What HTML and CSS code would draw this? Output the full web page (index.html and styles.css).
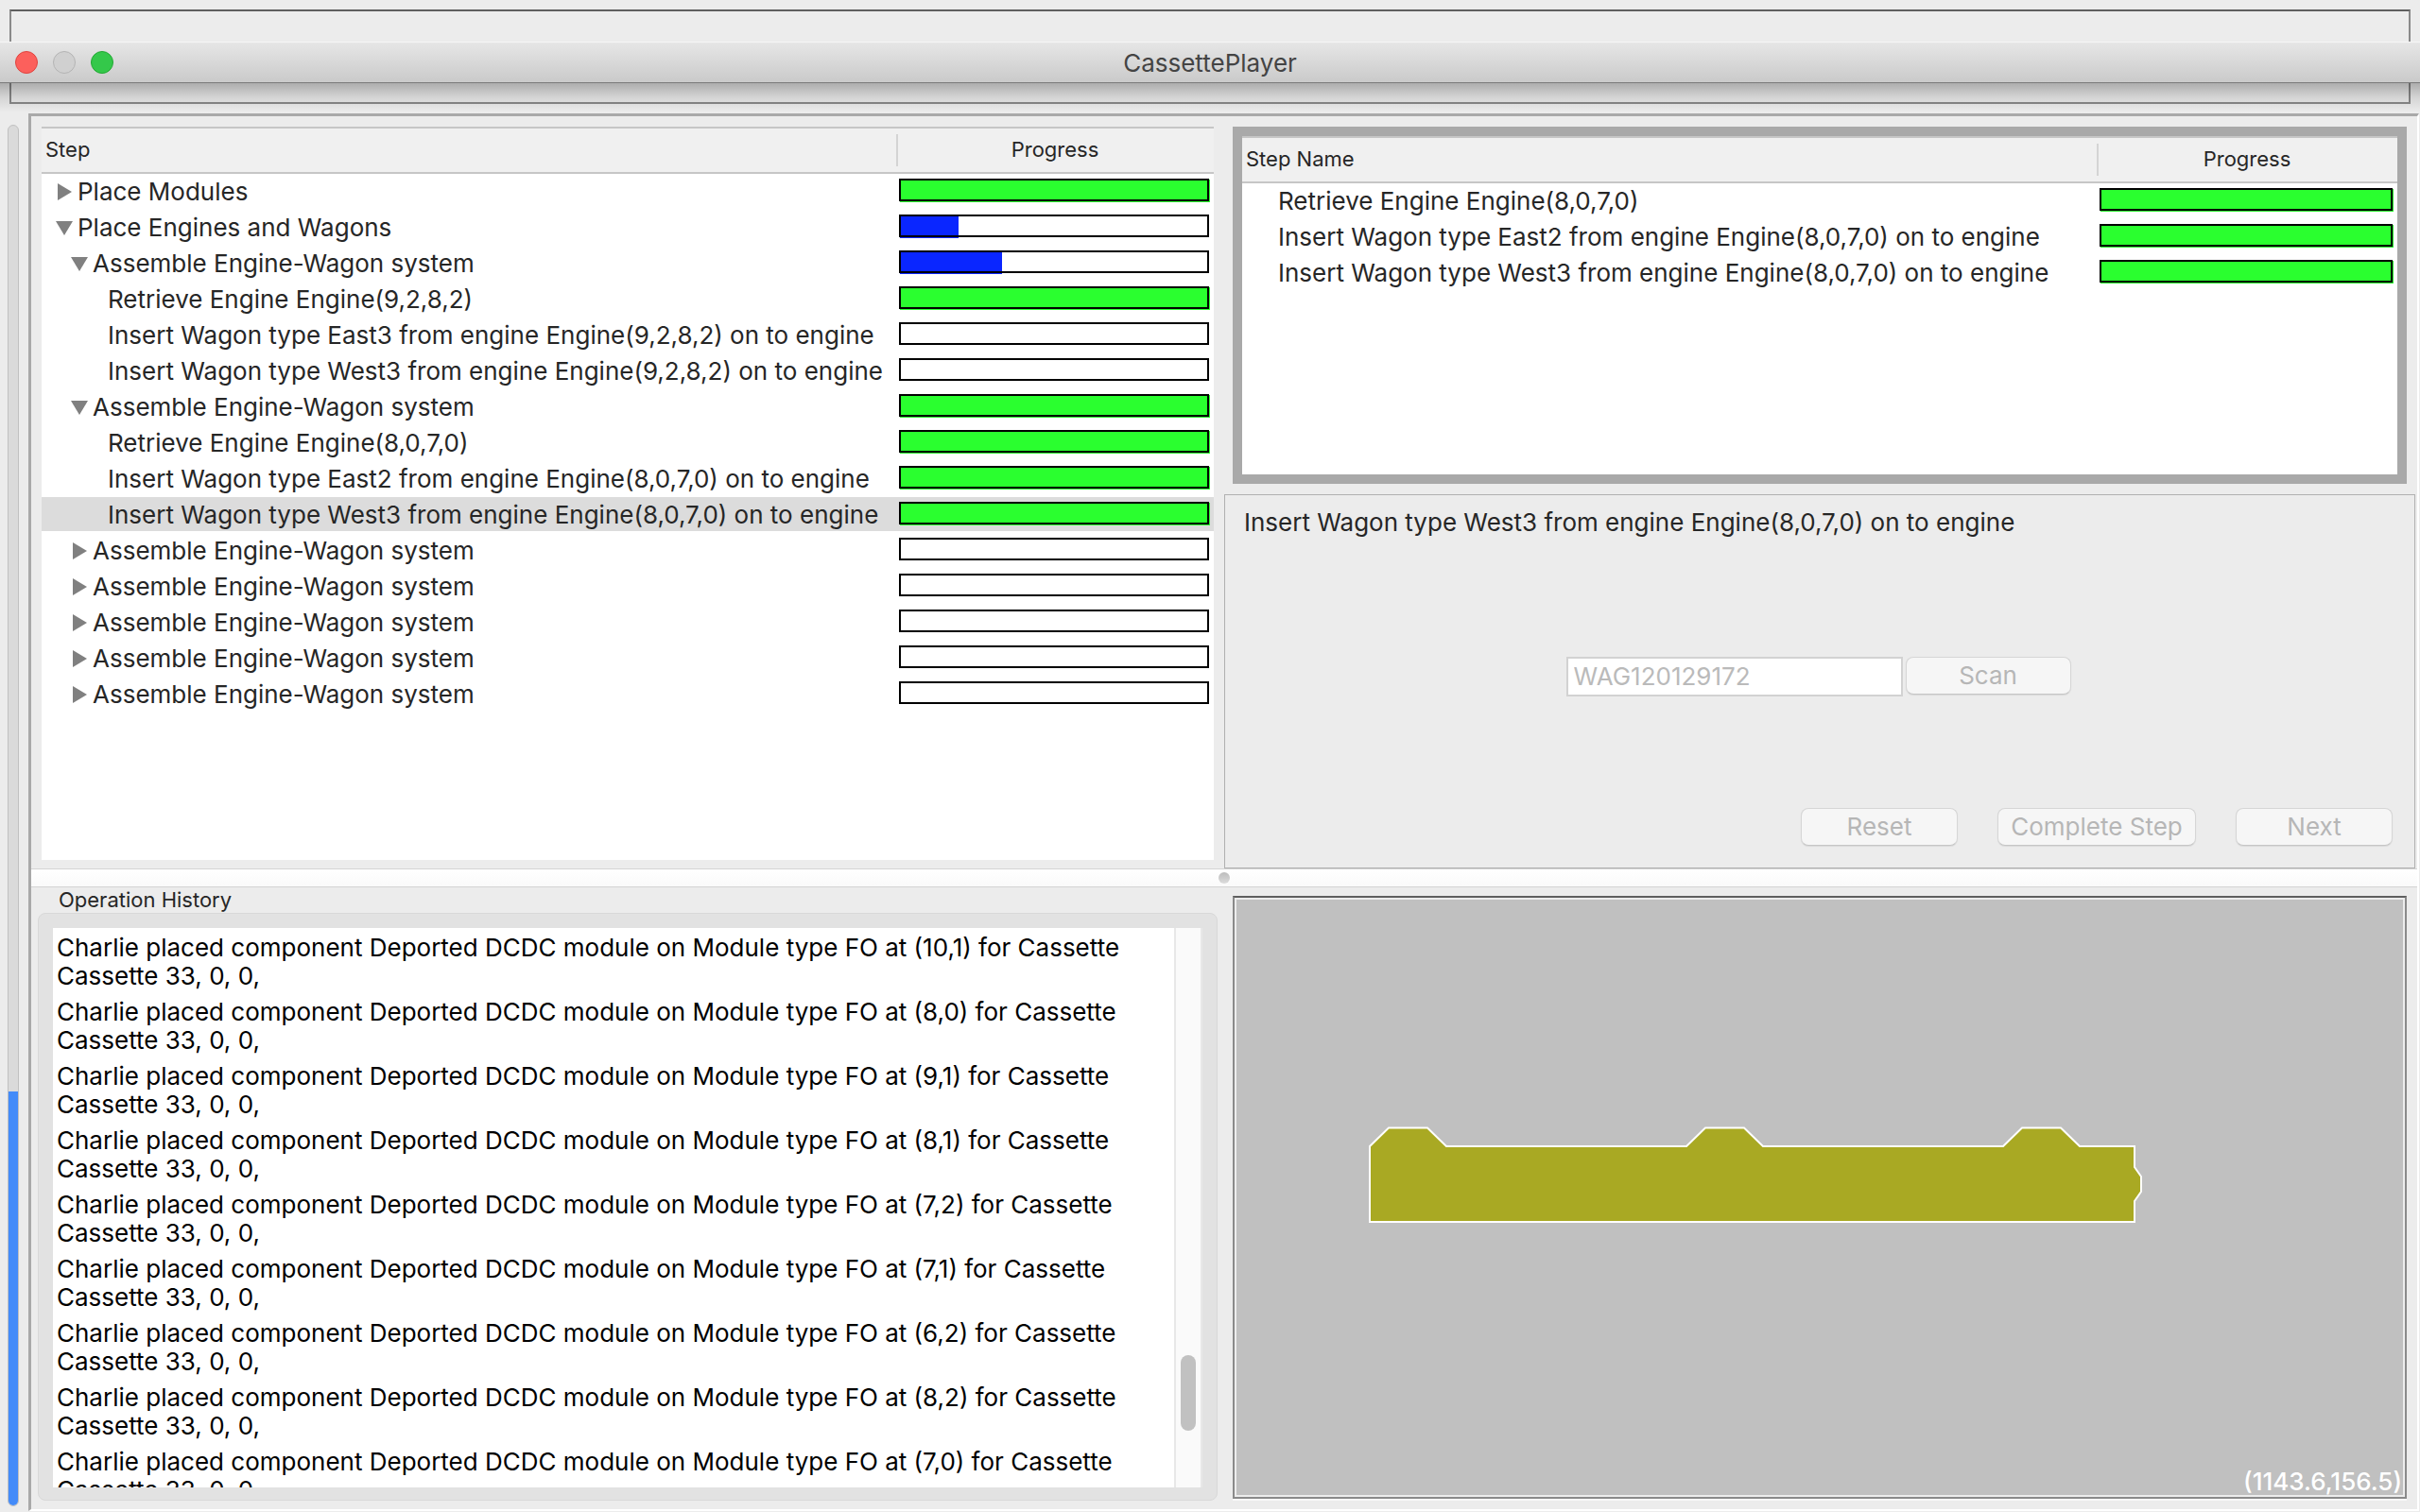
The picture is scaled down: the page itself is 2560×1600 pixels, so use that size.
FILE: index.html
```html
<!DOCTYPE html>
<html lang="en">
<head>
<meta charset="utf-8">
<title>CassettePlayer</title>
<link rel="stylesheet" href="styles.css">
</head>
<body>
<div class="app">
  <header class="top">
    <div class="top-frame"></div>
    <div class="titlebar">
      <div class="lights">
        <button class="light light-close" aria-label="Close"></button>
        <button class="light light-min" aria-label="Minimize" disabled></button>
        <button class="light light-zoom" aria-label="Zoom"></button>
      </div>
      <h1 class="title">CassettePlayer</h1>
    </div>
  </header>

  <div class="body">
    <div class="meter" role="progressbar" aria-label="Overall progress" aria-valuenow="30"><div class="meter-fill"></div></div>

    <main class="main">
      <div class="row row-top">
        <section class="cell">
          <div class="panel">
            <table class="steps">
              <colgroup><col><col class="col-progress"></colgroup>
              <thead><tr><th>Step</th><th>Progress</th></tr></thead>
              <tbody>
                <tr><td class="l0"><div class="step"><button class="tog" aria-label="Expand"><svg width="20" height="20"><path d="M3 1v18l15-9z"/></svg></button>Place Modules</div></td><td><div class="bar"><div class="fill" style="width:100%"></div></div></td></tr>
                <tr><td class="l0"><div class="step"><button class="tog" aria-label="Collapse"><svg width="20" height="20"><path d="M1 3h18l-9 15z"/></svg></button>Place Engines and Wagons</div></td><td><div class="bar"><div class="fill part" style="width:19%"></div></div></td></tr>
                <tr><td class="l1"><div class="step"><button class="tog" aria-label="Collapse"><svg width="20" height="20"><path d="M1 3h18l-9 15z"/></svg></button>Assemble Engine-Wagon system</div></td><td><div class="bar"><div class="fill part" style="width:33%"></div></div></td></tr>
                <tr><td class="l2"><div class="step">Retrieve Engine Engine(9,2,8,2)</div></td><td><div class="bar"><div class="fill" style="width:100%"></div></div></td></tr>
                <tr><td class="l2"><div class="step">Insert Wagon type East3 from engine Engine(9,2,8,2) on to engine</div></td><td><div class="bar"></div></td></tr>
                <tr><td class="l2"><div class="step">Insert Wagon type West3 from engine Engine(9,2,8,2) on to engine</div></td><td><div class="bar"></div></td></tr>
                <tr><td class="l1"><div class="step"><button class="tog" aria-label="Collapse"><svg width="20" height="20"><path d="M1 3h18l-9 15z"/></svg></button>Assemble Engine-Wagon system</div></td><td><div class="bar"><div class="fill" style="width:100%"></div></div></td></tr>
                <tr><td class="l2"><div class="step">Retrieve Engine Engine(8,0,7,0)</div></td><td><div class="bar"><div class="fill" style="width:100%"></div></div></td></tr>
                <tr><td class="l2"><div class="step">Insert Wagon type East2 from engine Engine(8,0,7,0) on to engine</div></td><td><div class="bar"><div class="fill" style="width:100%"></div></div></td></tr>
                <tr class="selected"><td class="l2"><div class="step">Insert Wagon type West3 from engine Engine(8,0,7,0) on to engine</div></td><td><div class="bar"><div class="fill" style="width:100%"></div></div></td></tr>
                <tr><td class="l1"><div class="step"><button class="tog" aria-label="Expand"><svg width="20" height="20"><path d="M3 1v18l15-9z"/></svg></button>Assemble Engine-Wagon system</div></td><td><div class="bar"></div></td></tr>
                <tr><td class="l1"><div class="step"><button class="tog" aria-label="Expand"><svg width="20" height="20"><path d="M3 1v18l15-9z"/></svg></button>Assemble Engine-Wagon system</div></td><td><div class="bar"></div></td></tr>
                <tr><td class="l1"><div class="step"><button class="tog" aria-label="Expand"><svg width="20" height="20"><path d="M3 1v18l15-9z"/></svg></button>Assemble Engine-Wagon system</div></td><td><div class="bar"></div></td></tr>
                <tr><td class="l1"><div class="step"><button class="tog" aria-label="Expand"><svg width="20" height="20"><path d="M3 1v18l15-9z"/></svg></button>Assemble Engine-Wagon system</div></td><td><div class="bar"></div></td></tr>
                <tr><td class="l1"><div class="step"><button class="tog" aria-label="Expand"><svg width="20" height="20"><path d="M3 1v18l15-9z"/></svg></button>Assemble Engine-Wagon system</div></td><td><div class="bar"></div></td></tr>
              </tbody>
            </table>
          </div>
        </section>

        <section class="cell-right">
          <div class="panel panel-framed">
            <table class="steps">
              <colgroup><col><col class="col-progress-small"></colgroup>
              <thead><tr><th>Step Name</th><th>Progress</th></tr></thead>
              <tbody>
                <tr><td class="sub"><div class="step">Retrieve Engine Engine(8,0,7,0)</div></td><td><div class="bar"><div class="fill" style="width:100%"></div></div></td></tr>
                <tr><td class="sub"><div class="step">Insert Wagon type East2 from engine Engine(8,0,7,0) on to engine</div></td><td><div class="bar"><div class="fill" style="width:100%"></div></div></td></tr>
                <tr><td class="sub"><div class="step">Insert Wagon type West3 from engine Engine(8,0,7,0) on to engine</div></td><td><div class="bar"><div class="fill" style="width:100%"></div></div></td></tr>
              </tbody>
            </table>
          </div>
          <form class="detail">
            <label class="detail-title" for="barcode">Insert Wagon type West3 from engine Engine(8,0,7,0) on to engine</label>
            <div class="scan">
              <input class="code" id="barcode" type="text" value="WAG120129172" disabled>
              <button class="btn btn-scan" type="button" disabled>Scan</button>
            </div>
            <div class="actions">
              <button class="btn btn-action" type="button" disabled>Reset</button>
              <button class="btn btn-wide" type="button" disabled>Complete Step</button>
              <button class="btn btn-action" type="button" disabled>Next</button>
            </div>
          </form>
        </section>
      </div>

      <div class="splitter" role="separator"><span class="grip"></span></div>

      <div class="row row-bottom">
        <section class="history">
          <h2 class="history-title">Operation History</h2>
          <div class="group">
            <div class="log">
              <div class="log-text">
                <p>Charlie placed component Deported DCDC module on Module type FO at (10,1) for Cassette Cassette 33, 0, 0,</p>
                <p>Charlie placed component Deported DCDC module on Module type FO at (8,0) for Cassette Cassette 33, 0, 0,</p>
                <p>Charlie placed component Deported DCDC module on Module type FO at (9,1) for Cassette Cassette 33, 0, 0,</p>
                <p>Charlie placed component Deported DCDC module on Module type FO at (8,1) for Cassette Cassette 33, 0, 0,</p>
                <p>Charlie placed component Deported DCDC module on Module type FO at (7,2) for Cassette Cassette 33, 0, 0,</p>
                <p>Charlie placed component Deported DCDC module on Module type FO at (7,1) for Cassette Cassette 33, 0, 0,</p>
                <p>Charlie placed component Deported DCDC module on Module type FO at (6,2) for Cassette Cassette 33, 0, 0,</p>
                <p>Charlie placed component Deported DCDC module on Module type FO at (8,2) for Cassette Cassette 33, 0, 0,</p>
                <p>Charlie placed component Deported DCDC module on Module type FO at (7,0) for Cassette Cassette 33, 0, 0,</p>
              </div>
              <div class="scrollbar"><div class="thumb"></div></div>
            </div>
          </div>
        </section>
        <section class="canvas">
          <svg class="drawing" viewBox="0 0 1234 630" preserveAspectRatio="xMidYMid meet" role="img" aria-label="Wagon outline">
            <path d="M141 261L161 241.500H202L222 261H476L496 241.500H537L557 261H811L831 241.500H872L892 261H950V283L957 293V309L950 319V341H141Z" fill="#a9a923" stroke="#fff" stroke-width="2"/>
          </svg>
          <output class="coords">(1143.6,156.5)</output>
        </section>
      </div>
    </main>
  </div>
</div>
</body>
</html>
```
FILE: styles.css
```css
* { box-sizing: border-box; }

body {
  margin: 0;
  background: #ececec;
  color: #262626;
  font-family: Inter, "Liberation Sans", sans-serif;
  font-size: 26px;
  line-height: 30px;
}

button, input { font: inherit; }

.app {
  display: flex;
  flex-direction: column;
  height: 100vh;
  overflow: hidden;
}

/* Title bar floating over the framed toolbar area */
.top {
  position: relative;
  flex: none;
  padding: 10px;
  height: 120px;
}
.top-frame {
  height: 100px;
  border: 2px solid #8a8a8a;
  border-top-color: #5f5f5f;
}
.titlebar {
  position: absolute;
  top: 44px;
  left: 0;
  right: 0;
  display: grid;
  grid-template-columns: 1fr auto 1fr;
  align-items: center;
  height: 44px;
  padding: 0 16px;
  background: linear-gradient(#e6e6e6, #cacaca);
  border-top: 1px solid #f6f6f6;
  border-bottom: 1px solid #a8a8a8;
}
.titlebar::after {
  content: "";
  position: absolute;
  top: 100%;
  left: 0;
  right: 0;
  height: 32px;
  background: linear-gradient(rgba(0, 0, 0, .28), rgba(0, 0, 0, .1) 50%, rgba(0, 0, 0, 0));
}
.lights { display: flex; gap: 16px; }
.light {
  width: 24px;
  height: 24px;
  padding: 0;
  border: 1px solid #b4b4b4;
  border-radius: 50%;
  background: #d0d0d0;
}
.light-close { background: #fc605c; border-color: #e0443f; }
.light-zoom { background: #34c84a; border-color: #22a833; }
.title {
  margin: 0;
  padding-top: 2px;
  font-size: 26px;
  font-weight: 400;
  color: #444;
}

.body {
  flex: 1;
  display: flex;
  min-height: 0;
}

/* Overall progress, filling from the bottom */
.meter {
  display: flex;
  flex-direction: column;
  justify-content: flex-end;
  width: 12px;
  margin: 12px 10px 6px 8px;
  border: 1px solid #c0c0c0;
  border-radius: 6px;
  background: #dadada;
  overflow: hidden;
}
.meter-fill { height: 30%; background: #438bf9; }

.main {
  flex: 1;
  display: flex;
  flex-direction: column;
  min-width: 0;
  margin-right: 1px;
  margin-bottom: 1px;
  border: 3px solid #a9a9a9;
  border-right: 2px solid #fff;
  border-bottom: 2px solid #fff;
}
.row {
  display: grid;
  grid-template-columns: 1fr 1fr;
  min-height: 0;
}
.row-top { flex: 796; }
.row-bottom { flex: 658; }

.cell {
  display: flex;
  flex-direction: column;
  min-width: 0;
  padding: 11px 11px 9px;
}
.cell-right {
  display: grid;
  grid-template-rows: 378fr 396fr;
  gap: 11px;
  min-width: 0;
  padding: 11px 2px 0 0;
}

.panel { flex: 1; background: #fff; min-height: 0; }
.panel-framed {
  margin: 0 9px;
  border: 10px solid #a9a9a9;
}

/* Step tables */
.steps {
  width: 100%;
  border-spacing: 0;
  table-layout: fixed;
}
.col-progress { width: 336px; }
.col-progress-small { width: 318px; }
.steps th {
  height: 50px;
  padding: 0 4px 2px;
  border-top: 2px solid #c6c6c6;
  border-bottom: 2px solid #c6c6c6;
  background: #f0f0f0;
  font-size: 22px;
  font-weight: 400;
  text-align: left;
}
.steps th + th {
  text-align: center;
  background: linear-gradient(#d4d4d4, #d4d4d4) 0 50% / 2px 34px no-repeat #f0f0f0;
}
.steps td {
  height: 38px;
  padding: 0;
  border-bottom: 2px solid #fff;
  vertical-align: top;
  white-space: nowrap;
}
.steps td + td { padding: 5px 4px 0 3px; }
.steps .l0 { padding-left: 14px; }
.steps .l1 { padding-left: 30px; }
.steps .l2 { padding-left: 70px; }
.steps .sub { padding-left: 38px; }
.selected td { background: #dcdcdc; }
.step {
  display: flex;
  align-items: center;
  gap: 4px;
  height: 36px;
  padding-top: 2px;
}
.tog {
  width: 20px;
  height: 20px;
  padding: 0;
  border: 0;
  background: none;
}
.tog svg { display: block; fill: #808080; }

.bar { position: relative; height: 25px; margin-bottom: -4px; padding: 1px 0 0 1px; }
.bar::after {
  content: "";
  position: absolute;
  inset: 0 1px 1px 0;
  border: 2px solid #000;
}
.fill { height: 24px; background: #2aff2f; }
.fill.part { background: #0a26ff; }

/* Detail form */
.detail {
  display: flex;
  flex-direction: column;
  justify-content: space-between;
  padding: 14px 23px 23px 20px;
  border: 1px solid #b0b0b0;
}
.scan {
  display: flex;
  justify-content: center;
  gap: 3px;
  padding-top: 8px;
}
.code {
  width: 356px;
  height: 42px;
  padding: 0 6px;
  border: 2px solid #d2d2d2;
  background: #fff;
  color: #bababa;
}
.btn {
  height: 40px;
  padding: 0;
  border: 1px solid #d6d6d6;
  border-bottom-color: #c6c6c6;
  border-radius: 8px;
  background: #f6f6f6;
  box-shadow: 0 1px 1px rgba(0, 0, 0, .08);
  color: #b6b6b6;
}
.btn-scan { width: 175px; }
.btn-action { width: 166px; }
.btn-wide { width: 210px; }
.actions {
  display: flex;
  justify-content: flex-end;
  gap: 42px;
}

.splitter {
  flex: none;
  display: flex;
  align-items: center;
  justify-content: center;
  height: 20px;
  border-top: 1px solid #d4d4d4;
  border-bottom: 1px solid #d4d4d4;
  background: linear-gradient(#fff, #fafafa);
}
.grip {
  width: 12px;
  height: 12px;
  border-radius: 50%;
  background: linear-gradient(#bcbcbc, #dcdcdc);
}

/* History log */
.history {
  display: flex;
  flex-direction: column;
  min-width: 0;
  min-height: 0;
  padding: 0 7px 9px 7px;
}
.history-title {
  margin: 0;
  padding-left: 22px;
  font-size: 22px;
  font-weight: 400;
  line-height: 27px;
}
.group {
  flex: 1;
  display: flex;
  min-height: 0;
  padding: 15px 15px 13px;
  border: 1px solid #d8d8d8;
  border-radius: 8px;
  background: #e2e2e2;
}
.log {
  flex: 1;
  display: flex;
  min-width: 0;
  overflow: hidden;
  background: #fff;
  color: #000;
}
.log-text { flex: 1; min-width: 0; padding: 6px 4px; }
.log-text p { margin: 0 0 8px; }
.scrollbar {
  display: flex;
  flex-direction: column;
  align-items: center;
  justify-content: flex-end;
  width: 30px;
  padding-bottom: 60px;
  border: 2px solid #e8e8e8;
  border-width: 0 2px;
  background: #fafafa;
}
.thumb {
  width: 16px;
  height: 80px;
  border-radius: 8px;
  background: #c1c1c1;
}

/* Drawing surface */
.canvas {
  position: relative;
  display: flex;
  min-width: 0;
  min-height: 0;
  margin: 9px 11px 11px 9px;
  border: 2px solid #8a8a8a;
  border-top-color: #5f5f5f;
  background: #c0c0c0;
  box-shadow: inset 0 0 0 2px #ececec, 0 2px 0 #f8f8f8;
  padding: 2px;
}
.drawing { flex: 1; min-width: 0; height: 100%; }
.coords {
  position: absolute;
  right: 3px;
  bottom: 1px;
  color: #fff;
  font-weight: 500;
}
```
